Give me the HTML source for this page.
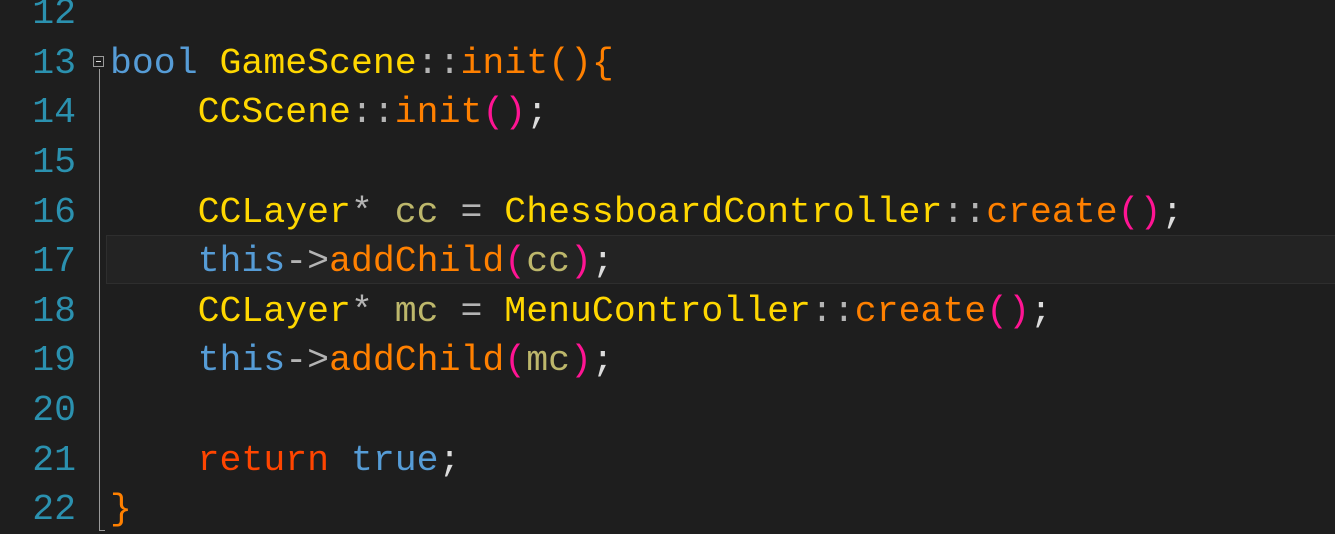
<!DOCTYPE html>
<html><head><style>
html,body{margin:0;padding:0;background:#1e1e1e;width:1335px;height:534px;overflow:hidden;position:relative}
.l{position:absolute;left:0;height:49.6px;line-height:49.6px;font-family:"Liberation Mono",monospace;font-size:36.5px;white-space:pre;color:#dcdcdc;margin-top:2px}
.n{position:absolute;width:76px;text-align:right;color:#2b91af;left:0}
.c{position:absolute;left:110px}
.k{color:#569cd6}.t{color:#ffd700}.o{color:#b4b4b4}.f{color:#ff8000}.p{color:#ff1493}.v{color:#bdb76b}.r{color:#ff4500}
</style></head><body>
<div style="position:absolute;left:106px;top:235px;width:1235px;height:49px;background:#232323;border:1px solid #2e2e2e;box-sizing:border-box"></div>
<div style="position:absolute;left:99px;top:69px;width:1px;height:462px;background:#9a9a9a"></div>
<div style="position:absolute;left:99px;top:530px;width:6px;height:1px;background:#9a9a9a"></div>
<div style="position:absolute;left:93px;top:56px;width:11px;height:11px;border:1px solid #9a9a9a;box-sizing:border-box;background:#1e1e1e"><div style="position:absolute;left:2px;top:4px;width:5px;height:1px;background:#ddd"></div></div>
<div class="l" style="top:-12.8px"><span class="n">12</span></div>
<div class="l" style="top:36.8px"><span class="n">13</span><span class="c"><span class="k">bool</span> <span class="t">GameScene</span><span class="o">::</span><span class="f">init(){</span></span></div>
<div class="l" style="top:86.4px"><span class="n">14</span><span class="c">    <span class="t">CCScene</span><span class="o">::</span><span class="f">init</span><span class="p">()</span>;</span></div>
<div class="l" style="top:136px"><span class="n">15</span></div>
<div class="l" style="top:185.6px"><span class="n">16</span><span class="c">    <span class="t">CCLayer</span><span class="o">*</span> <span class="v">cc</span> <span class="o">=</span> <span class="t">ChessboardController</span><span class="o">::</span><span class="f">create</span><span class="p">()</span>;</span></div>
<div class="l" style="top:235.2px"><span class="n">17</span><span class="c">    <span class="k">this</span><span class="o">-&gt;</span><span class="f">addChild</span><span class="p">(</span><span class="v">cc</span><span class="p">)</span>;</span></div>
<div class="l" style="top:284.8px"><span class="n">18</span><span class="c">    <span class="t">CCLayer</span><span class="o">*</span> <span class="v">mc</span> <span class="o">=</span> <span class="t">MenuController</span><span class="o">::</span><span class="f">create</span><span class="p">()</span>;</span></div>
<div class="l" style="top:334.4px"><span class="n">19</span><span class="c">    <span class="k">this</span><span class="o">-&gt;</span><span class="f">addChild</span><span class="p">(</span><span class="v">mc</span><span class="p">)</span>;</span></div>
<div class="l" style="top:384px"><span class="n">20</span></div>
<div class="l" style="top:433.6px"><span class="n">21</span><span class="c">    <span class="r">return</span> <span class="k">true</span>;</span></div>
<div class="l" style="top:483.2px"><span class="n">22</span><span class="c"><span class="f">}</span></span></div>
</body></html>
